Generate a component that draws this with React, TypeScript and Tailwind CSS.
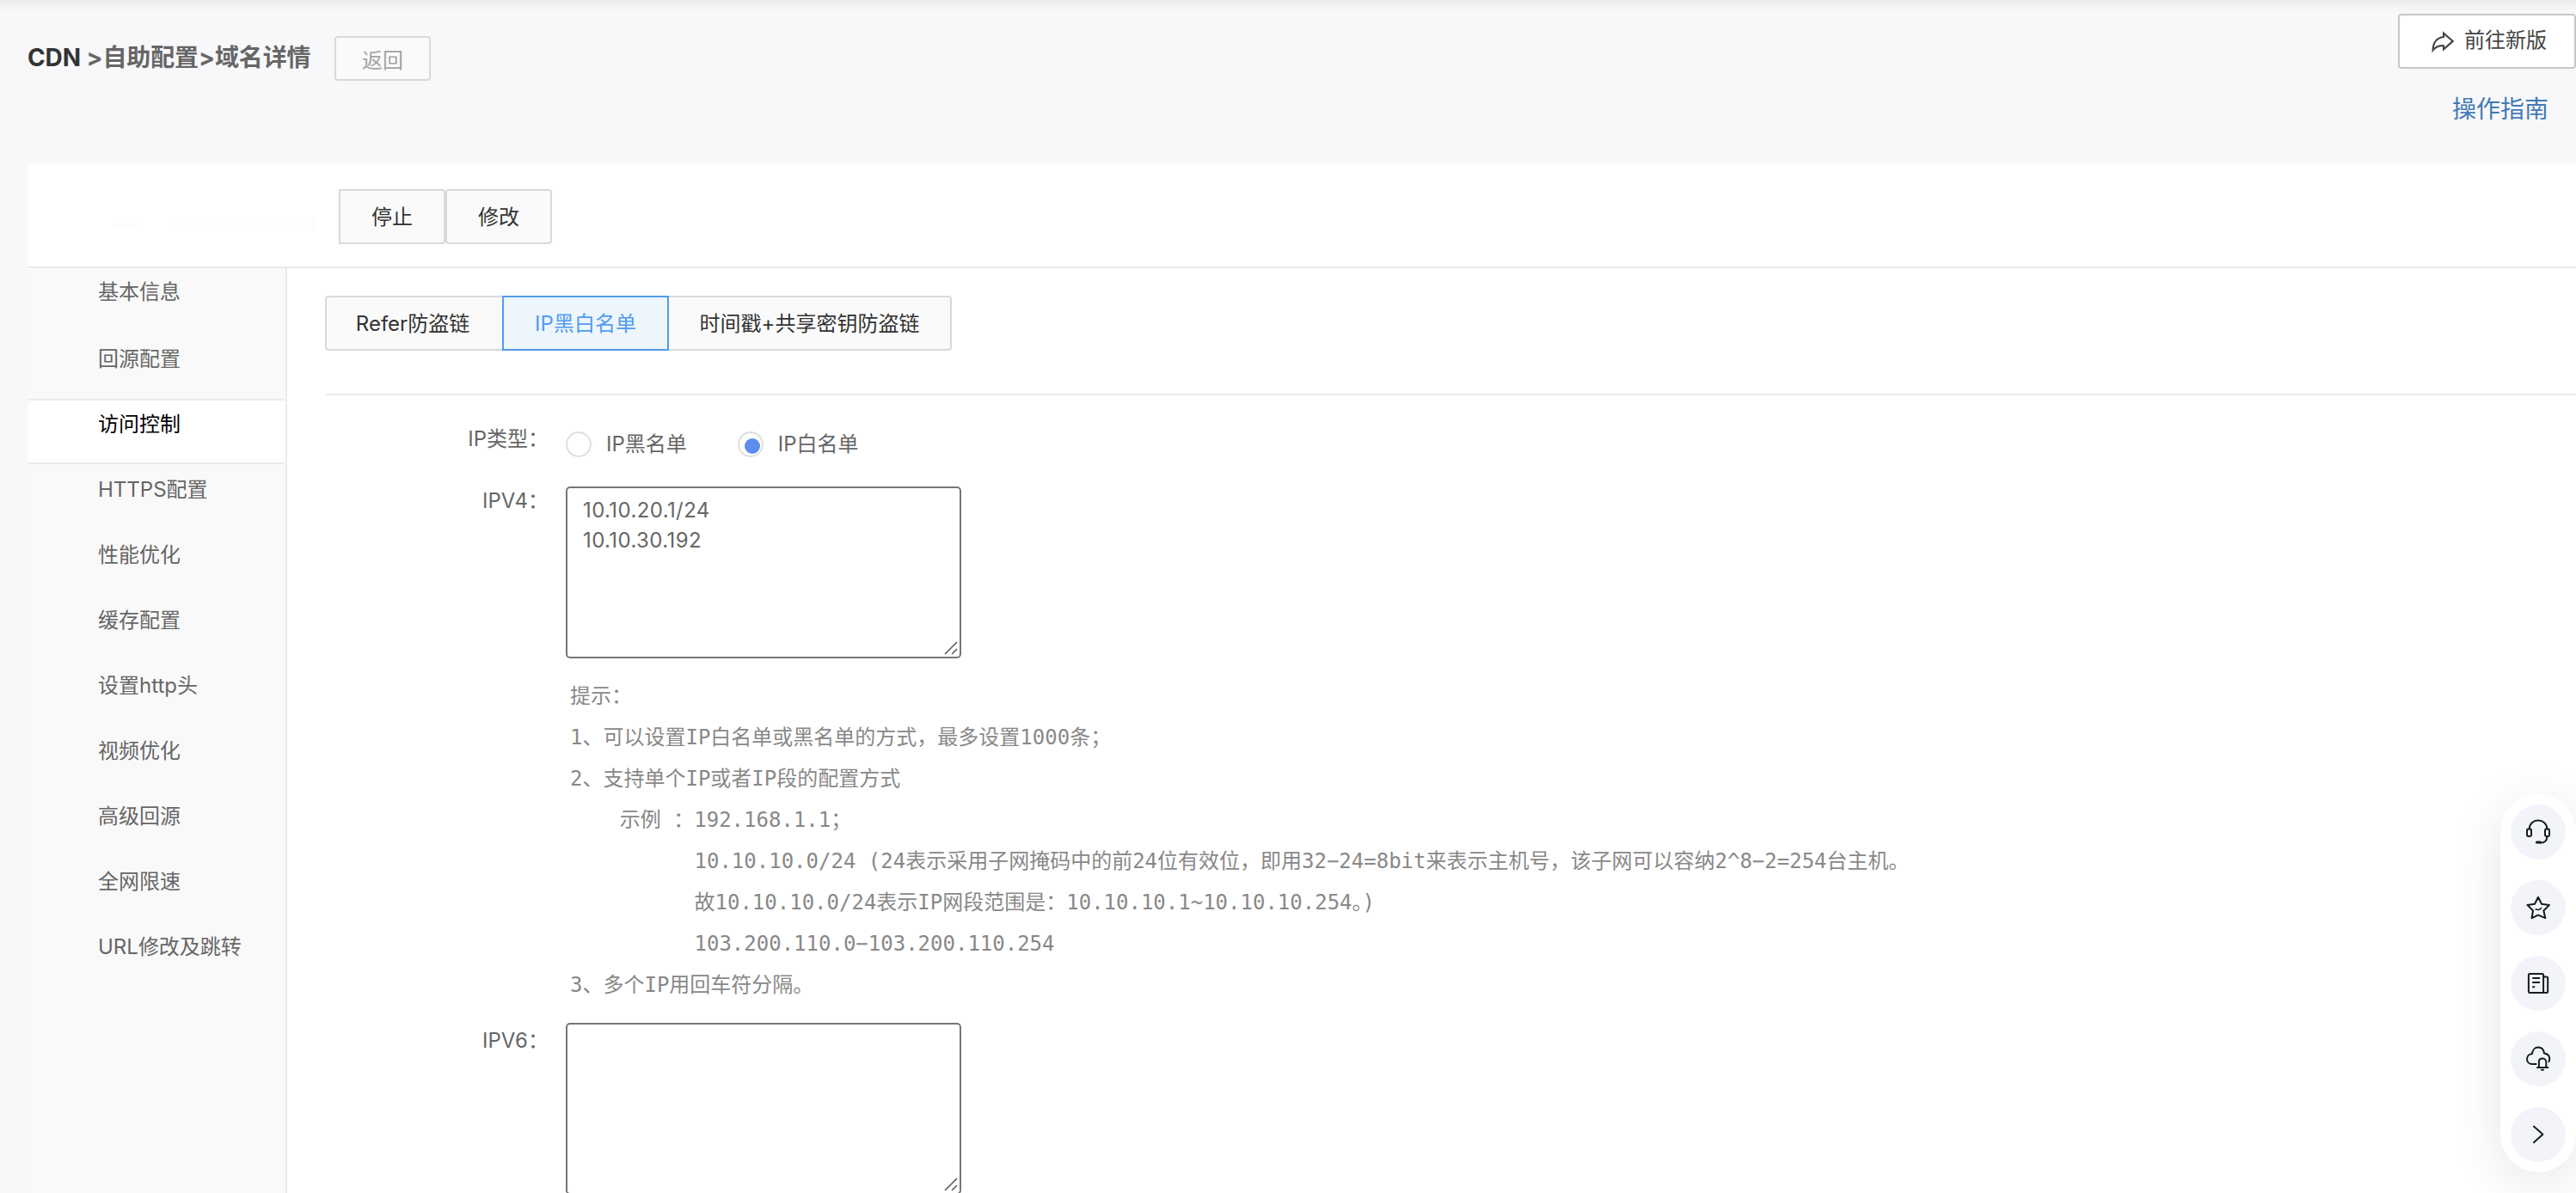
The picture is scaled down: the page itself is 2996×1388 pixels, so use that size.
import type { ReactNode } from 'react';

const menuItems = [
  '基本信息',
  '回源配置',
  '访问控制',
  'HTTPS配置',
  '性能优化',
  '缓存配置',
  '设置http头',
  '视频优化',
  '高级回源',
  '全网限速',
  'URL修改及跳转',
];

const tips = [
  '提示：',
  '1、可以设置IP白名单或黑名单的方式，最多设置1000条；',
  '2、支持单个IP或者IP段的配置方式',
  '    示例 ：192.168.1.1；',
  '          10.10.10.0/24 (24表示采用子网掩码中的前24位有效位，即用32−24=8bit来表示主机号，该子网可以容纳2^8−2=254台主机。',
  '          故10.10.10.0/24表示IP网段范围是：10.10.10.1~10.10.10.254。)',
  '          103.200.110.0−103.200.110.254',
  '3、多个IP用回车符分隔。',
];

const floatIcons: { name: string; icon: ReactNode }[] = [
  {
    name: 'service',
    icon: (
      <>
        <path d="M21.8 28.4C21.8 22.4 26.3 18.6 32 18.6S42.3 22.4 42.3 28.4" />
        <rect x="19" y="28.6" width="5" height="8.4" rx="1.4" />
        <rect x="40" y="28.6" width="5" height="8.4" rx="1.4" />
        <path d="M42.3 37.2C42.3 42 39.5 44.4 35 44.6" />
        <path d="M30.4 43.9h4" strokeWidth="3" />
      </>
    ),
  },
  {
    name: 'favorite',
    icon: (
      <>
        <path d="M32 19.8L36 27.8L45 28.9L38.4 35.5L40.3 44.2L32 40.6L24.6 44.2L26 35.5L19.4 28.9L28 27.8Z" />
        <path d="M29.2 33.8Q33 35.6 35.6 32.4" strokeWidth="1.6" />
      </>
    ),
  },
  {
    name: 'document',
    icon: (
      <>
        <rect x="20.9" y="20.9" width="17.2" height="22.2" rx="1.5" />
        <path d="M38.1 24.4h3.6q1.5 0 1.5 1.5v15.7q0 1.5-1.5 1.5h-5" />
        <path d="M26 26.1h7.3M26 31.1h7.3M26 36.3h1.4" />
      </>
    ),
  },
  {
    name: 'notice',
    icon: (
      <>
        <path d="M29.6 38.1H25.2C21.4 38.1 19 35.4 19 32.2C19 28.8 21.4 26.3 25 26C25.4 21.6 28.2 18.6 32 18.6S38.5 21.2 39 25.6C42.8 26.2 45.2 28.6 45.2 31.8Q45.2 33.8 44.4 35.2" />
        <path d="M32.9 41.7V35.6C32.9 33.2 34.6 31.6 37 31.6S41.3 33.2 41.3 35.6V41.7M31 42.1H43.4M36 44.8H38" />
      </>
    ),
  },
  {
    name: 'collapse',
    icon: <path d="M26.9 22.6L37.4 31.8L26.9 41.2" />,
  },
];

function Radio({ label, checked }: { label: string; checked?: boolean }) {
  return (
    <div className="flex items-center">
      <span className="flex size-[30px] items-center justify-center rounded-full border-2 border-[#dedede] bg-white">
        {checked && <span className="mt-1 ml-1 size-[18px] rounded-full bg-[#5d8cf0]" />}
      </span>
      <span className="mb-px ml-[17px]">{label}</span>
    </div>
  );
}

function FormRow({ label, labelClass, children }: { label: string; labelClass: string; children: ReactNode }) {
  return (
    <div className="flex items-start">
      <div className={`w-[260px] shrink-0 text-right leading-8 ${labelClass}`}>{label}</div>
      <div className="ml-5">{children}</div>
    </div>
  );
}

function IpBox({ lines }: { lines: string[] }) {
  return (
    <div className="relative h-[200px] w-[460px] rounded-[5px] border-2 border-[#767676] bg-white px-[18px] py-2 leading-[35px]">
      {lines.map((line) => (
        <div key={line} className="tracking-[0.4px]">{line}</div>
      ))}
      <svg className="absolute right-0.5 bottom-0.5" width="16" height="16" fill="none" stroke="#5c5c5c" strokeWidth="1.6">
        <path d="M1 15L15 1M9 15L15 9" />
      </svg>
    </div>
  );
}

export default function App() {
  return (
    <div className="relative h-[1388px] w-[2996px] overflow-hidden bg-[#f8f8fa] font-['Inter','Noto_Sans_CJK_SC',sans-serif] text-2xl text-[#666]">
      <div className="absolute inset-x-0 top-0 h-3.5 bg-linear-to-b from-[#ececee] to-[#f8f8fa]" />

      {/* Page header */}
      <header className="flex h-[190px] items-start justify-between pl-8">
        <div className="flex items-start pt-[42px]">
          <h1 className="mt-[5px] w-[330px] text-[28px] leading-10 font-bold tracking-[-0.1px] whitespace-pre">
            <span className="text-[#333]">CDN </span>&gt;自助配置&gt;域名详情
          </h1>
          <button className="ml-[27px] h-[52px] w-28 rounded-sm border-2 border-[#d9d9d9] bg-[#fafafa] pt-1.5 text-[#a3a3a3]">
            返回
          </button>
        </div>
        <div className="flex flex-col items-end pt-4">
          <button className="flex h-16 w-[207px] items-center rounded-sm border-2 border-[#c8c8c8] bg-white pl-[37px] text-[#444]">
            <svg className="mt-0.5" width="27" height="26" fill="none" stroke="#444" strokeWidth="2.1">
              <path d="M14 2.6V7C6 8 1.8 12.6 1.6 22.4C4.6 18.6 8.6 16.8 14 17.2V21.4L24.8 11.9Z" />
            </svg>
            <span className="mb-0.5 ml-[11px]">前往新版</span>
          </button>
          <a className="mt-[27px] mr-8 text-[28px] leading-10 text-[#427ab5]">操作指南</a>
        </div>
      </header>

      <main className="ml-8 h-[1198px] bg-white">
        {/* Domain actions */}
        <div className="flex h-[122px] items-start border-b-2 border-[#ebebeb] pt-[30px] text-[#333]">
          <div className="flex w-[362px] gap-[38px] pt-8 pl-[98px]">
            <span className="h-3 w-9 bg-[#fdfdfd]" />
            <span className="h-[18px] w-[166px] rounded-r-lg bg-[#fdfdfd]" />
          </div>
          <button className="h-16 w-[124px] rounded-r-sm border-2 border-[#d9d9d9] bg-[#fafafa] pt-0.5">停止</button>
          <button className="h-16 w-[124px] rounded-sm border-2 border-[#d9d9d9] bg-[#fafafa] pt-0.5">修改</button>
        </div>

        <div className="flex h-[1076px]">
          <nav className="w-[302px] shrink-0 border-r-2 border-[#ebebeb] bg-[#f9f9f9]">
            {menuItems.map((item, index) =>
              item === '访问控制' ? (
                <div key={item} className="mx-px h-[76px] border-y-2 border-[#ebebeb] bg-white pt-2.5 pl-[81px] leading-9 text-black">
                  {item}
                </div>
              ) : (
                <div key={item} className={`pl-[82px] leading-9 ${index === 0 ? 'h-[78px] pt-2.5' : index === 1 ? 'h-[74px] pt-2.5' : 'h-[76px] pt-3'}`}>
                  {item}
                </div>
              ),
            )}
          </nav>

          <section className="grow pt-8 pl-11">
            {/* Tabs */}
            <div className="flex h-16 text-[#333]">
              <button className="w-[206px] rounded-l-sm border-2 border-r-0 border-[#d9d9d9] bg-[#fafafa] pt-0.5 pr-1">
                Refer防盗链
              </button>
              <button className="w-[194px] border-2 border-[#529bee] bg-[#edf5fd] pt-0.5 text-[#529bee]">IP黑白名单</button>
              <button className="w-[329px] rounded-r-sm border-2 border-l-0 border-[#d9d9d9] bg-[#fafafa] pt-0.5">
                时间戳+共享密钥防盗链
              </button>
            </div>

            <div className="mt-[50px] border-t-2 border-[#ebebeb] pt-[42px]">
              <FormRow label="IP类型：" labelClass="mt-[-7px]">
                <div className="flex h-[30px] gap-[59px]">
                  <Radio label="IP黑名单" />
                  <Radio label="IP白名单" checked />
                </div>
              </FormRow>

              <div className="mt-[34px]">
                <FormRow label="IPV4：" labelClass="mt-px">
                  <IpBox lines={['10.10.20.1/24', '10.10.30.192']} />
                  <div className="mt-5 ml-[5px] h-[404px] font-['DejaVu_Sans_Mono','Noto_Sans_CJK_SC',monospace] leading-[48px] whitespace-pre text-[#888]">
                    {tips.map((tip) => (
                      <div key={tip} className="h-12">{tip}</div>
                    ))}
                  </div>
                </FormRow>
              </div>

              <FormRow label="IPV6：" labelClass="mt-[5px]">
                <IpBox lines={[]} />
              </FormRow>
            </div>
          </section>
        </div>
      </main>

      {/* Floating toolbar */}
      <aside className="absolute right-0 bottom-6 flex h-[440px] w-[88px] flex-col items-center gap-6 rounded-full bg-white py-3 shadow-[0_12px_60px_rgba(0,0,0,0.1)]">
        {floatIcons.map(({ name, icon }) => (
          <button key={name} className="size-16 rounded-full bg-[#f3f4f9]">
            <svg viewBox="0 0 64 64" fill="none" stroke="#171c21" strokeWidth="2" strokeLinecap="round" strokeLinejoin="round">
              {icon}
            </svg>
          </button>
        ))}
      </aside>
    </div>
  );
}
